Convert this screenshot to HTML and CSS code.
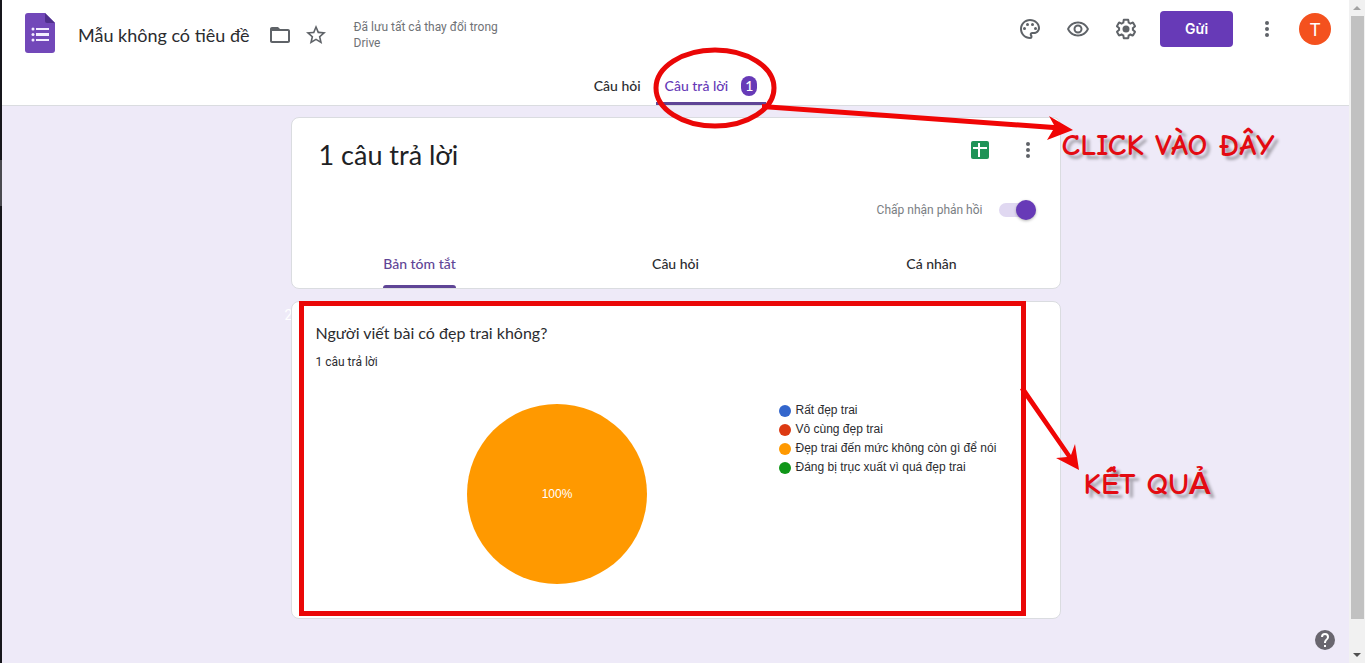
FILE: index.html
```html
<!doctype html>
<html lang="vi">
<head>
<meta charset="utf-8">
<title>Mẫu không có tiêu đề - Google Biểu mẫu</title>
<link rel="stylesheet" href="styles.css">
</head>
<body>
<div class="window">
    <div class="page">
        <header class="header">
            <div class="toolbar">
                <svg class="logo" width="30" height="40" viewBox="0 0 30 40">
                    <path fill="#7248b9" d="M3 0h17l10 10v27a3 3 0 0 1-3 3H3a3 3 0 0 1-3-3V3a3 3 0 0 1 3-3z"/>
                    <path fill="#4f2f8c" d="M20 0l10 10H22a2 2 0 0 1-2-2z"/>
                    <path fill="#f3edff" d="M11 15h13v2H11zM11 20h13v3H11zM11 26h13v2H11z"/>
                    <circle cx="8" cy="16" r="1.500" fill="#f3edff"/>
                    <circle cx="8" cy="21.500" r="1.500" fill="#f3edff"/>
                    <circle cx="8" cy="27" r="1.500" fill="#f3edff"/>
                </svg>
                <h1 class="title">Mẫu không có tiêu đề</h1>
                <button class="icon" aria-label="Di chuyển"><svg width="24" height="24" viewBox="0 0 24 24"><path d="M20 6h-8l-2-2H4c-1.100 0-2 .9-2 2v12c0 1.100.9 2 2 2h16c1.100 0 2-.9 2-2V8c0-1.100-.9-2-2-2zm0 12H4V8h16z"/></svg></button>
                <button class="icon star" aria-label="Gắn dấu sao"><svg width="24" height="24" viewBox="0 0 24 24"><path d="M22 9.240l-7.190-.62L12 2 9.190 8.630 2 9.240l5.460 4.730L5.820 21 12 17.270 18.180 21l-1.630-7.030zM12 15.400l-3.760 2.270 1-4.280-3.320-2.880 4.380-.38L12 6.100l1.710 4.040 4.380.38-3.320 2.880 1 4.280z"/></svg></button>
                <p class="saved">Đã lưu tất cả thay đổi trong Drive</p>
                <div class="actions">
                    <button class="icon" aria-label="Tùy chỉnh giao diện"><svg width="24" height="24" viewBox="0 0 24 24"><path d="M12 22C6.490 22 2 17.510 2 12S6.490 2 12 2s10 4.040 10 9c0 3.310-2.690 6-6 6h-1.770c-.28 0-.5.22-.5.5 0 .12.050.23.130.33.410.47.640 1.060.640 1.670A2.500 2.500 0 0 1 12 22zm0-18c-4.410 0-8 3.590-8 8s3.590 8 8 8c.28 0 .5-.22.5-.5a.54.54 0 0 0-.14-.35c-.41-.46-.63-1.050-.63-1.650a2.500 2.500 0 0 1 2.500-2.500H16c2.210 0 4-1.790 4-4 0-3.860-3.590-7-8-7z"/><circle cx="6.500" cy="11.500" r="1.500"/><circle cx="9.500" cy="7.500" r="1.500"/><circle cx="14.500" cy="7.500" r="1.500"/><circle cx="17.500" cy="11.500" r="1.500"/></svg></button>
                    <button class="icon" aria-label="Xem trước"><svg width="24" height="24" viewBox="0 0 24 24"><path d="M12 6.500c3.790 0 7.170 2.130 8.820 5.500-1.650 3.370-5.020 5.500-8.820 5.500S4.830 15.370 3.180 12C4.830 8.630 8.210 6.500 12 6.500m0-2C7 4.500 2.730 7.610 1 12c1.730 4.390 6 7.500 11 7.500s9.270-3.110 11-7.500c-1.730-4.390-6-7.500-11-7.500zm0 5a2.500 2.500 0 0 1 0 5 2.500 2.500 0 0 1 0-5m0-2c-2.480 0-4.500 2.020-4.500 4.500s2.020 4.500 4.500 4.500 4.500-2.020 4.500-4.500-2.020-4.500-4.500-4.500z"/></svg></button>
                    <button class="icon" aria-label="Cài đặt"><svg width="24" height="24" viewBox="0 0 24 24"><path d="M13.850 22.250h-3.700c-.74 0-1.360-.54-1.450-1.270l-.27-1.890c-.27-.14-.53-.29-.79-.46l-1.800.72c-.7.26-1.470-.03-1.810-.65L2.200 15.530c-.35-.66-.2-1.440.36-1.880l1.530-1.190c-.01-.15-.02-.3-.02-.46 0-.15.010-.31.020-.46l-1.520-1.190c-.59-.45-.74-1.260-.37-1.880l1.850-3.190c.34-.62 1.110-.9 1.790-.63l1.810.73c.26-.17.52-.32.780-.46l.27-1.910c.09-.7.710-1.250 1.440-1.250h3.700c.74 0 1.360.54 1.450 1.270l.27 1.890c.27.14.53.29.790.46l1.800-.72c.71-.26 1.480.03 1.820.65l1.840 3.180c.36.66.2 1.440-.36 1.880l-1.520 1.190c.01.15.02.3.02.46s-.01.31-.02.46l1.520 1.190c.56.45.72 1.230.37 1.860l-1.860 3.220c-.34.62-1.110.9-1.800.63l-1.800-.72c-.26.17-.52.32-.78.46l-.27 1.910c-.1.680-.720 1.220-1.460 1.220zm-3.230-2h2.760l.37-2.550.53-.22c.44-.18.88-.44 1.340-.78l.45-.34 2.380.96 1.380-2.400-2.030-1.580.07-.56c.03-.26.06-.51.06-.78s-.03-.53-.06-.78l-.07-.56 2.030-1.580-1.390-2.400-2.390.96-.45-.35c-.42-.32-.87-.58-1.330-.77l-.52-.22-.37-2.550h-2.760l-.37 2.550-.53.21c-.44.19-.88.44-1.340.79l-.45.33-2.380-.95-1.390 2.390 2.030 1.580-.07.56a7 7 0 0 0 0 1.580l.07.56-2.030 1.580 1.380 2.400 2.390-.96.45.35c.43.33.86.58 1.330.77l.53.22z"/><circle cx="12" cy="12" r="3.500"/></svg></button>
                    <button class="send">Gửi</button>
                    <button class="icon more" aria-label="Khác"><svg width="24" height="24" viewBox="0 0 24 24"><circle cx="12" cy="6" r="2"/><circle cx="12" cy="12" r="2"/><circle cx="12" cy="18" r="2"/></svg></button>
                    <button class="avatar" aria-label="Tài khoản">T</button>
                </div>
            </div>
            <nav class="tabs">
                <a class="tab" href="#questions">Câu hỏi</a>
                <a class="tab active" href="#responses">Câu trả lời <span class="count">1</span></a>
            </nav>
        </header>

        <main class="content" id="responses">
            <section class="card summary">
                <div class="summary-top">
                    <h2 class="summary-title">1 câu trả lời</h2>
                    <button class="icon" aria-label="Tạo bảng tính"><svg width="24" height="24" viewBox="0 0 24 24"><rect x="3" y="3" width="18" height="18" rx="2" fill="#1f9457"/><path d="M5 9h14v2H5zM10 5h2v14h-2z" fill="#fff"/></svg></button>
                    <button class="icon" aria-label="Tùy chọn"><svg width="24" height="24" viewBox="0 0 24 24"><circle cx="12" cy="6" r="2"/><circle cx="12" cy="12" r="2"/><circle cx="12" cy="18" r="2"/></svg></button>
                </div>
                <label class="accept">
                    Chấp nhận phản hồi
                    <input class="switch" type="checkbox" checked>
                </label>
                <nav class="views">
                    <a class="view active" href="#summary">Bản tóm tắt</a>
                    <a class="view" href="#question">Câu hỏi</a>
                    <a class="view" href="#individual">Cá nhân</a>
                </nav>
            </section>

            <div class="result">
                <span class="step">2</span>
                <section class="card question" id="summary">
                    <h3 class="question-title">Người viết bài có đẹp trai không?</h3>
                    <p class="question-count">1 câu trả lời</p>
                    <div class="chart">
                        <svg class="pie" width="180" height="180" viewBox="0 0 180 180">
                            <circle cx="90" cy="90" r="90" fill="#ff9900"/>
                            <text x="90" y="94" text-anchor="middle">100%</text>
                        </svg>
                        <ul class="legend">
                            <li class="blue">Rất đẹp trai</li>
                            <li class="red">Vô cùng đẹp trai</li>
                            <li class="orange">Đẹp trai đến mức không còn gì để nói</li>
                            <li class="green">Đáng bị trục xuất vì quá đẹp trai</li>
                        </ul>
                    </div>
                </section>
            </div>
        </main>

        <button class="help" aria-label="Trợ giúp"><svg width="24" height="24" viewBox="0 0 24 24"><path fill="#69666f" d="M12 2a10 10 0 1 0 0 20 10 10 0 0 0 0-20z"/><path fill="#fff" d="M13 19h-2v-2h2zm2.070-7.750l-.9.920C13.450 12.900 13 13.500 13 15h-2v-.5c0-1.100.45-2.100 1.170-2.830l1.240-1.260c.37-.36.59-.86.59-1.410a2 2 0 0 0-4 0H8a4 4 0 0 1 8 0c0 .88-.36 1.680-.93 2.250z"/></svg></button>
    </div>

    <div class="scrollbar">
        <svg width="16" height="16" viewBox="0 0 16 16"><path fill="#a3a3a3" d="M4 10l4-4 4 4z"/></svg>
        <div class="thumb"></div>
        <svg width="16" height="16" viewBox="0 0 16 16"><path fill="#505050" d="M4 6l4 4 4-4z"/></svg>
    </div>
</div>

<!-- hand-drawn notes over the page -->
<div class="notes">
    <svg class="marks" width="1366" height="663" viewBox="0 0 1366 663">
        <ellipse cx="715" cy="88" rx="59" ry="38" fill="none" stroke="#ea0707" stroke-width="5"/>
        <rect x="301.500" y="303.500" width="722" height="310" fill="none" stroke="#ea0707" stroke-width="5"/>
        <path fill="#f00505" d="M762 104l292 21-5-9 24 14-26 10 6-10-291-21z"/>
        <path fill="#f00505" d="M1020 389l5-1 46 67 4-11 4 26-23-12 11-1-46-66z"/>
    </svg>
    <span class="note note-click">CLICK VÀO ĐÂY</span>
    <span class="note note-result">KẾT QUẢ</span>
</div>
</body>
</html>
```
FILE: styles.css
```css
* {
	box-sizing: border-box;
}
body {
	margin: 0;
	background: #eeeaf8;
	color: #2b2c30;
	font-family: Roboto, "Noto Sans", sans-serif;
	font-size: 12px;
	line-height: 16px;
}
h1, h2, h3, p, ul {
	margin: 0;
	padding: 0;
	font-weight: 400;
}
a {
	color: inherit;
	text-decoration: none;
}
button {
	padding: 0;
	border: 0;
	background: none;
	font-family: inherit;
	cursor: pointer;
}
.window {
	display: flex;
	min-height: 100vh;
}
.page {
	position: relative;
	flex: 1;
	padding-left: 2px;
	background: linear-gradient(#17171c 160px, #4a4a50 160px, #4a4a50 206px, #17171c 206px) left / 2px 100% no-repeat;
}

/* header */
.header {
	height: 106px;
	display: flex;
	flex-direction: column;
	justify-content: space-between;
	border-bottom: 1px solid #dadce0;
	background: #fff;
}
.toolbar {
	display: flex;
	align-items: flex-start;
	padding: 11px 18px 0 23px;
}
.logo {
	margin-top: 2px;
}
.title {
	margin: 12px 18px 0 23px;
	font-family: Lato, "Noto Sans", sans-serif;
	font-size: 18px;
	line-height: 24px;
}
.icon {
	display: flex;
	fill: #5f6368;
}
.toolbar > .icon {
	margin-top: 12px;
}
.toolbar > .star {
	margin: 12px 26px 0 12px;
}
.saved {
	width: 168px;
	margin-top: 8px;
	color: #6f7276;
}
.actions {
	display: flex;
	align-items: center;
	gap: 24px;
	margin-left: auto;
}
.send {
	width: 73px;
	height: 36px;
	margin-left: -2px;
	padding-bottom: 2px;
	border-radius: 4px;
	background: #673ab7;
	color: #fff;
	font-family: Inter, sans-serif;
	font-size: 14px;
	font-weight: 600;
}
.more {
	margin-right: -4px;
	margin-left: -2px;
}
.avatar {
	width: 32px;
	height: 32px;
	border-radius: 50%;
	background: #f4511e;
	color: #fff;
	font-size: 18px;
}
.tabs {
	display: flex;
	justify-content: center;
	gap: 6px;
	font-family: Lato, "Noto Sans", sans-serif;
	font-size: 14px;
	font-weight: 500;
}
.tab {
	display: flex;
	align-items: center;
	height: 36px;
	padding: 0 9px;
	border-bottom: 3px solid transparent;
}
.tab.active {
	border-color: #5f4596;
	color: #673ab7;
}
.count {
	width: 16px;
	margin-left: 13px;
	border-radius: 8px;
	background: #673ab7;
	color: #fff;
	line-height: 20px;
	text-align: center;
}

/* cards */
.content {
	display: flex;
	flex-direction: column;
	gap: 12px;
	max-width: 770px;
	margin: 0 auto;
	padding-top: 11px;
}
.card {
	border: 1px solid #dadce0;
	border-radius: 8px;
	background: #fff;
}
.summary-top {
	display: flex;
	align-items: flex-start;
	gap: 24px;
	padding: 20px 20px 0 27px;
}
.summary-title {
	flex: 1;
	color: #202124;
	font-family: Lato, "Noto Sans", sans-serif;
	font-size: 27px;
	line-height: 34px;
}
.accept {
	display: flex;
	align-items: center;
	justify-content: flex-end;
	gap: 16px;
	margin-top: 30px;
	padding-right: 24px;
	color: #7a7e83;
}
.switch {
	appearance: none;
	display: flex;
	align-items: center;
	justify-content: flex-end;
	width: 37px;
	height: 14px;
	margin: 0;
	border-radius: 7px;
	background: #e0d8f1;
}
.switch::before {
	content: "";
	width: 20px;
	height: 20px;
	border-radius: 50%;
	background: #673ab7;
	box-shadow: 0 1px 3px rgba(0, 0, 0, .3);
}
.views {
	display: grid;
	grid-template-columns: repeat(3, 1fr);
	justify-items: center;
	margin-top: 24px;
	font-family: Lato, "Noto Sans", sans-serif;
	font-size: 14px;
	font-weight: 500;
}
.view {
	height: 46px;
	line-height: 43px;
}
.view.active {
	color: #5f4596;
}
.view.active::after {
	content: "";
	display: block;
	height: 3px;
	border-radius: 3px 3px 0 0;
	background: #5f4596;
}
.result {
	position: relative;
}
.step {
	position: absolute;
	top: 6px;
	left: -6px;
	color: #fff;
	font-size: 14px;
}
.question {
	position: relative;
	padding: 19px 24px 34px;
}
.question-title {
	font-family: Lato, "Noto Sans", sans-serif;
	font-size: 16px;
	line-height: 24px;
}
.question-count {
	margin-top: 9px;
}
.chart {
	display: grid;
	grid-template-columns: 482px 1fr;
	align-items: start;
	margin-top: 34px;
}
.pie {
	justify-self: center;
}
.pie text {
	fill: #fff;
	font-family: "Liberation Sans", Arial, sans-serif;
	font-size: 12px;
}
.legend {
	margin: -3px 0 0 -19px;
	list-style: none;
	font-family: "Liberation Sans", Arial, sans-serif;
	line-height: 19px;
}
.legend li {
	display: flex;
	align-items: center;
	gap: 5px;
}
.legend li::before {
	content: "";
	width: 12px;
	height: 12px;
	border-radius: 50%;
}
.blue::before {
	background: #3366cc;
}
.red::before {
	background: #dc3912;
}
.orange::before {
	background: #ff9900;
}
.green::before {
	background: #109618;
}
.help {
	position: absolute;
	right: 12px;
	bottom: 11px;
	display: flex;
}

/* scrollbar */
.scrollbar {
	display: flex;
	flex-direction: column;
	width: 16px;
	background: #f1f1f1;
}
.thumb {
	flex: 1;
	margin: 0 1px 28px 2px;
	background: #c1c1c1;
}

/* notes */
.notes {
	position: absolute;
	top: 0;
	left: 50%;
	width: 0;
	height: 0;
	pointer-events: none;
}
.marks {
	position: absolute;
	top: 0;
	left: -683px;
	clip-path: inset(0 1px 0 0);
}
.note {
	position: absolute;
	color: #e30b12;
	font-family: "Comic Neue", "Comic Sans MS", Lato, "Noto Sans", sans-serif;
	font-size: 31px;
	font-weight: 700;
	line-height: 32px;
	white-space: nowrap;
	text-shadow: 4px 4px 3px rgba(0, 0, 0, .3);
}
.note-click {
	top: 129px;
	left: 379px;
}
.note-result {
	top: 468px;
	left: 401px;
}
```
